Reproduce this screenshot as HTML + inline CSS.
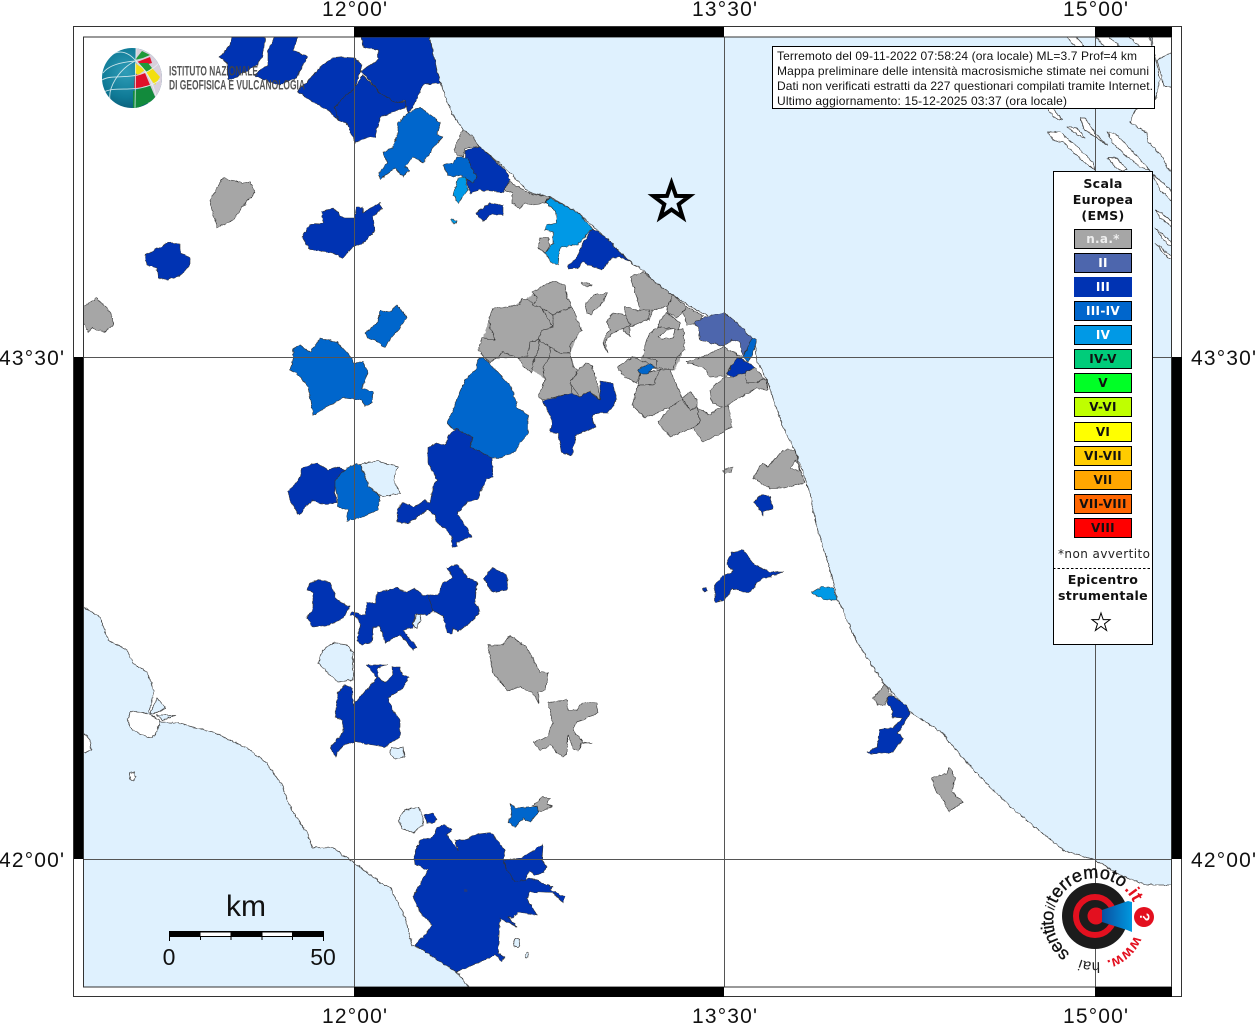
<!DOCTYPE html>
<html><head><meta charset="utf-8"><title>Mappa intensità macrosismiche</title>
<style>
html,body{margin:0;padding:0;background:#fff;width:1255px;height:1024px;overflow:hidden}
svg{display:block}
.l{font-family:"Liberation Sans",sans-serif;font-size:21px;fill:#111}
.t{font-family:"Liberation Sans",sans-serif;font-size:12px;fill:#111}
.b{font-family:"DejaVu Sans",sans-serif;font-weight:bold;font-size:12px;fill:#111;text-anchor:middle;letter-spacing:.3px}
.bb{font-size:12.6px}
.s polygon{stroke:#333;stroke-width:.6;stroke-linejoin:round}
.g polygon{fill:#a6a6a6}
.h polygon{fill:#0033b3}
.m polygon{fill:#0066cc}
.c polygon,.c ellipse{fill:#dff1fe;stroke:#444;stroke-width:.8}
.i polygon{fill:#fff;stroke:#444;stroke-width:.8;stroke-linejoin:round}
</style></head><body>
<svg width="1255" height="1024" viewBox="0 0 1255 1024" xmlns="http://www.w3.org/2000/svg">
<defs>
<filter id="rough" filterUnits="userSpaceOnUse" x="0" y="0" width="1255" height="1024" color-interpolation-filters="sRGB">
<feTurbulence type="fractalNoise" baseFrequency=".22" numOctaves="2" seed="4" result="n"/>
<feDisplacementMap in="SourceGraphic" in2="n" scale="3.2" xChannelSelector="R" yChannelSelector="G"/>
<feGaussianBlur stdDeviation=".25"/>
</filter>
<radialGradient id="gl" cx=".4" cy=".4" r=".7"><stop offset="0" stop-color="#2f9db8"/><stop offset=".6" stop-color="#0f7a96"/><stop offset="1" stop-color="#0a5570"/></radialGradient>
<linearGradient id="cone" x1="0" x2="1" y1="0" y2="0"><stop offset="0" stop-color="#0a4fa0"/><stop offset="1" stop-color="#0099e0"/></linearGradient>
<clipPath id="sph"><circle cx="132" cy="78" r="30"/></clipPath>
<path id="circ" d="M1137 916 A42 42 0 1 1 1136.99 915.9" fill="none"/>
</defs>

<g filter="url(#rough)">
<!-- seas -->
<polygon fill="#dff1fe" stroke="#444" stroke-width=".8" points="429,33 433,53 440,83 453,115 463,130 480,147 507,170 530,193 550,197 577,212 605,237 630,262 643,270 655,282 673,295 693,308 710,317 725,313 737,323 755,342 757,362 767,380 783,427 795,450 810,493 815,522 828,562 837,598 857,642 883,682 910,712 943,733 950,743 972,768 990,787 1020,815 1063,850 1095,860 1120,875 1147,885 1176,885 1176,33"/>
<polygon fill="#dff1fe" stroke="#444" stroke-width=".8" points="78,604 83,607 100,617 108,640 127,650 133,663 147,672 154,690 149,712 160,722 177,723 213,732 247,748 267,763 283,787 290,807 307,833 313,848 332,847 353,862 380,882 390,888 405,917 412,945 433,953 458,973 463,980 473,992 78,992"/>

<!-- Croatian coast and islands -->
<g class="i">
<polygon points="1150,33 1176,33 1176,175 1167,168 1163,157 1148,142 1147,133 1130,122 1135,110 1155,100 1160,80 1155,55"/>
<polygon points="1065,33 1072,33 1085,47 1075,47"/>
<polygon points="1092,33 1105,33 1120,47 1105,47"/>
<polygon points="1125,33 1148,33 1152,47 1140,47"/>
<polygon points="1048,132 1060,132 1073,143 1093,163 1095,170 1085,163 1063,142 1053,140"/>
<polygon points="1067,127 1077,128 1085,138 1077,135"/>
<polygon points="1080,118 1085,118 1095,133 1107,145 1097,138 1085,130"/>
<polygon points="1107,132 1117,135 1133,152 1150,170 1140,167 1123,153 1113,143"/>
<polygon points="1108,158 1117,158 1127,170 1118,170"/>
<polygon points="1047,108 1053,108 1062,120 1055,118"/>
<polygon points="1153,175 1160,180 1176,195 1176,205 1160,190"/>
<polygon points="1155,210 1160,212 1176,224 1176,230 1160,218"/>
<polygon points="1155,228 1160,232 1176,246 1168,245"/>
<polygon points="1155,243 1160,247 1176,260 1168,258"/>
<polygon points="83,732 90,740 91,750 85,753 78,753 78,732"/>
<polygon points="130,773 134,772 136,777 133,781 130,779"/>
<polygon points="128,720 130,712 137,711 148,714 160,720 157,732 152,738 143,735 137,732 130,728"/>
</g>
<g class="c">
<polygon points="1157,60 1176,50 1176,88 1164,86"/>
<polygon points="150,714 157,698 165,708 157,713"/>
<polygon points="157,715 175,715 163,720"/>
</g>

<!-- gray -->
<polygon fill="#a6a6a6" points="489,320 532,295 553,283 565,287 580,330 570,352 576,372 598,387 598,398 545,398 547,380 526,366 518,356 490,360 480,350"/>
<polygon fill="#a6a6a6" points="640,360 655,335 680,332 683,352 675,370 660,372"/>
<g class="s g">
<polygon points="210,200 223,178 243,183 250,182 255,192 240,210 233,220 217,228 212,210"/>
<polygon points="78,307 83,307 97,298 110,312 114,325 105,332 92,328 88,332 83,322 78,322"/>
<polygon points="454,150 460,135 463,130 472,135 479,147 465,148 463,157 457,155"/>
<polygon points="507,180 530,194 550,197 545,203 533,205 525,203 520,209 512,203 512,193 505,190"/>
<polygon points="538,248 540,238 548,238 550,245 545,253"/>
<polygon points="582,282 592,285 588,287 583,285"/>
<polygon points="585,305 593,295 607,293 603,302 590,315 587,313"/>
<polygon points="532,292 553,281 565,285 567,298 572,307 553,315 542,308 533,305 538,298"/>
<polygon points="489,318 493,308 507,307 520,305 522,298 532,302 533,305 542,308 553,327 542,330 538,340 530,342 528,355 518,358 503,352 490,363 478,350 482,338 495,340 490,327"/>
<polygon points="553,315 572,307 577,320 582,330 570,345 570,353 560,353 550,347 538,340 542,330 553,327"/>
<polygon points="530,342 540,340 538,352 533,362 532,373 525,368 518,358 528,355"/>
<polygon points="550,347 560,353 570,353 573,367 578,370 570,383 572,393 543,400 538,397 545,380 543,367 550,357"/>
<polygon points="585,363 592,365 598,387 600,400 590,391 580,397 570,383 578,370"/>
<polygon points="630,277 643,272 655,282 673,295 667,307 652,310 650,320 640,310 637,298"/>
<polygon points="667,307 673,295 687,307 677,318 668,313"/>
<polygon points="683,312 687,307 703,316 697,323 687,325"/>
<polygon points="625,307 638,310 650,310 647,320 630,327 630,337 623,330 627,323 625,315"/>
<polygon points="607,322 613,313 625,315 630,325 620,330 612,333 605,342 608,353 603,343 607,333 610,330"/>
<polygon points="660,320 667,313 680,323 678,330 658,327"/>
<polygon points="645,345 650,333 658,327 678,330 683,328 685,350 677,357 673,370 657,368 657,360 643,357"/>
<polygon style="fill:#fff" points="658,337 667,330 675,329 673,338 663,339"/>
<polygon points="617,367 633,357 645,362 657,368 640,373 637,383 625,377"/>
<polygon points="640,374 660,370 660,375 653,385 638,385"/>
<polygon points="660,370 670,370 683,400 680,403 670,407 657,413 645,418 632,405 638,385 653,385"/>
<polygon points="682,398 690,392 697,400 697,407 690,410"/>
<polygon points="670,407 682,400 690,410 697,408 700,422 693,428 670,437 658,422"/>
<polygon points="700,422 697,408 710,415 718,408 728,405 732,427 722,433 703,442 693,428"/>
<polygon points="686,362 703,357 723,347 735,353 742,357 728,370 727,376 710,377 703,367"/>
<polygon points="710,390 725,377 733,377 753,370 757,377 767,380 768,390 757,388 730,403 723,407 712,403"/>
<polygon points="745,373 755,367 763,378 757,383 747,383"/>
<polygon points="753,478 762,463 768,467 783,450 795,450 800,470 805,483 787,487 785,488 770,488"/>
<polygon style="fill:#fff" points="790,468 796,460 800,471"/>
<polygon points="722,470 733,467 732,472 725,473"/>
<polygon points="488,645 503,645 510,635 527,648 540,672 548,673 545,690 538,692 539,703 532,693 520,687 508,691 493,673"/>
<polygon points="533,742 547,737 553,723 548,702 567,700 568,710 577,710 583,702 597,703 598,713 577,722 573,730 583,742 592,743 582,743 578,751 573,748 568,735 567,753 562,757 550,745 540,751"/>
<polygon points="532,806 542,797 550,798 547,803 552,807 539,812 537,807"/>
<polygon points="873,698 885,685 892,695 887,698 885,705 878,705"/>
<polygon points="932,778 947,773 949,767 955,778 952,792 963,802 949,812 943,800 935,790"/>
</g>

<!-- III-IV -->
<g class="s m">
<polygon points="420,107 440,122 437,135 443,137 433,148 423,163 413,157 405,167 410,170 403,177 395,168 380,179 378,175 387,163 383,152 392,148 398,133 398,123 408,113"/>
<polygon points="293,358 293,350 300,345 310,352 320,338 337,342 352,358 353,363 363,362 368,372 362,388 373,392 372,403 365,407 362,400 343,398 313,415 308,387 297,373 290,370"/>
<polygon points="365,333 378,322 380,310 390,312 397,305 407,317 400,328 392,337 385,348 375,340 367,338"/>
<polygon points="477,360 483,357 510,385 515,398 517,408 528,415 528,433 513,453 500,458 487,458 483,453 470,447 473,438 457,429 453,430 447,423 453,410 465,380 477,368"/>
<polygon points="345,470 352,465 360,464 368,483 380,497 378,510 360,518 347,521 348,510 338,507 337,493 333,482"/>
<polygon points="510,803 515,808 537,807 539,812 530,822 523,818 515,827 508,823 512,813"/>
<polygon points="638,369 650,364 655,367 647,374 640,374"/>
<polygon points="743,357 752,338 757,340 753,353 748,362"/>
</g>

<!-- III -->
<g class="s h">
<polygon points="233,33 265,33 265,41 262,57 257,65 247,70 237,77 228,80 227,63 220,57 230,45"/>
<polygon points="277,33 300,33 293,50 307,57 297,77 280,85 270,82 253,75 268,65 268,50"/>
<polygon points="297,91 307,82 320,67 333,58 343,57 355,58 362,65 355,87 343,98 335,107 338,120 328,110 313,102 303,95"/>
<polygon points="355,87 363,75 380,93 397,103 408,100 405,108 380,117 375,137 365,138 355,143 347,123 338,120 335,107 343,98"/>
<polygon points="362,33 429,33 433,53 440,83 423,85 413,107 408,113 405,100 397,103 380,93 365,75 360,72 363,70 378,60 378,50 363,47"/>
<polygon points="302,237 310,225 323,223 322,212 333,208 343,218 355,218 357,207 363,207 363,213 380,203 382,208 373,217 375,230 363,243 352,248 343,258 330,252 310,250"/>
<polygon points="145,255 158,248 168,243 180,244 180,253 190,258 190,265 182,275 167,280 158,278 157,268 147,265"/>
<polygon points="465,150 480,147 505,170 510,180 503,192 480,190 470,193 465,175"/>
<polygon points="476,213 490,203 503,205 503,215 490,215 483,222"/>
<polygon points="592,228 605,237 630,262 620,257 612,258 602,270 593,267 582,262 578,268 568,269 568,265 577,257 582,245"/>
<polygon points="543,401 572,393 580,397 590,391 597,398 600,400 600,381 613,383 617,400 608,413 597,413 592,417 596,427 576,435 572,455 562,453 558,433 550,433 552,420"/>
<polygon points="727,373 738,357 755,367 745,373 733,377"/>
<polygon points="457,429 473,438 470,447 483,453 492,458 493,477 487,478 477,500 467,502 457,513 470,533 472,537 457,542 457,547 452,547 452,537 445,528 437,523 435,515 427,510 417,517 410,523 398,522 397,512 402,502 415,507 425,500 430,503 433,487 437,480 428,463 428,447 437,443 445,445 450,433"/>
<polygon points="288,492 300,477 302,468 317,463 328,470 338,467 345,470 335,480 335,493 337,502 325,505 313,500 305,507 300,515 297,512 290,500"/>
<polygon points="307,590 310,583 318,580 330,582 337,600 350,607 343,618 330,625 313,627 307,618 313,608 313,592"/>
<polygon points="350,615 353,612 365,615 367,602 375,603 377,593 395,588 407,592 415,588 422,595 428,595 433,610 428,615 415,615 413,627 403,630 417,648 413,650 400,635 385,643 380,627 373,627 372,642 362,645 357,640 360,625 358,618"/>
<polygon points="428,595 438,595 443,583 453,577 447,568 457,564 467,577 477,582 475,603 480,612 470,623 457,632 453,628 452,634 447,632 443,617 433,610"/>
<polygon points="484,578 492,568 502,572 508,578 507,590 497,592 490,590"/>
<polygon points="367,665 387,665 378,668 378,677 385,683 393,675 392,667 400,667 402,675 409,677 403,688 388,698 393,710 400,720 400,737 385,747 355,742 343,745 335,757 330,747 343,733 343,720 335,717 338,693 345,685 352,688 353,705 377,678"/>
<polygon points="414,855 420,840 433,837 437,827 445,825 452,830 447,835 458,850 455,840 467,840 473,835 492,833 505,850 503,860 507,870 513,878 523,880 530,878 553,887 550,890 565,897 563,903 553,893 530,892 527,898 537,915 518,912 513,918 508,917 517,927 500,918 498,953 505,957 502,962 495,955 480,962 457,972 433,957 415,945 423,937 432,925 420,912 413,897 428,870 415,865"/>
<polygon points="503,860 522,858 538,847 543,845 542,860 547,867 543,873 533,875 530,870 525,880 515,882 507,870"/>
<polygon points="425,815 433,813 437,820 432,823 427,823"/>
<polygon points="754,502 762,494 770,497 773,509 763,512 763,516 758,507"/>
<polygon points="727,563 732,552 743,550 755,565 770,572 783,572 767,578 762,578 750,592 742,592 732,588 725,600 715,602 715,585 723,575 733,572"/>
<polygon points="703,589 706,588 707,591 704,592"/>
<polygon points="887,697 893,696 907,707 910,713 902,727 898,733 903,738 893,752 872,754 867,752 877,747 880,730 893,728 902,718 892,717 893,710 887,703"/>
</g>
<circle cx="466" cy="891" r="1.5" fill="#223a80"/>

<!-- III-IV on top -->
<g class="s m">
<polygon points="443,165 453,163 457,157 468,158 472,170 477,177 473,183 463,178 462,175 453,177 448,175"/>
</g>
<!-- IV -->
<g class="s">
<polygon fill="#0099e6" points="458,178 465,177 468,190 458,203 453,195"/>
<polygon fill="#0099e6" points="450,220 453,219 457,221 454,224"/>
<polygon fill="#0099e6" points="546,202 550,198 577,212 592,228 578,245 572,245 560,248 558,265 552,263 545,253 553,243 553,232 545,230 547,225 557,223 556,213"/>
<polygon fill="#0099e6" points="811,593 823,586 833,588 837,600 827,600"/>
<polygon fill="#4d66ad" points="694,322 705,317 725,313 737,323 747,333 752,338 743,357 740,342 732,340 723,346 710,343 700,340 698,327 695,325"/>
</g>

<!-- lakes -->
<g class="c">
<polygon points="360,464 377,461 398,467 393,480 400,493 383,497 368,487 367,480"/>
<polygon points="417,614 422,614 417,628 412,625"/>
<polygon points="318,663 323,650 333,643 347,645 353,653 353,680 338,682 327,672"/>
<polygon points="391,748 403,748 405,757 395,759 390,755"/>
<polygon points="398,820 405,810 418,807 423,817 423,825 413,833 402,828"/>
<ellipse cx="517" cy="943" rx="3.5" ry="4.5"/>
<ellipse cx="527" cy="955" rx="1.8" ry="3"/>
</g>
</g>

<!-- graticule -->
<g stroke="#555" stroke-width="1" fill="none">
<path d="M354.5 37V987M724.5 37V987M1095.5 37V987"/>
<path d="M83 357.5H1172M83 859.5H1172"/>
</g>

<!-- frame -->
<g>
<path fill="#fff" fill-rule="evenodd" d="M73 26H1182V997H73ZM83.5 37V987H1171.5V37Z"/>
<path fill="#fff" d="M0 0H73V1024H0ZM1182 0H1255V1024H1182ZM73 0H1182V26H73ZM73 997H1182V1024H73Z"/>
<rect x="73.5" y="26.5" width="1108" height="970" fill="none" stroke="#333"/>
<rect x="83.5" y="37" width="1088" height="950" fill="none" stroke="#333"/>
<rect x="354" y="27" width="370" height="10" fill="#000"/>
<rect x="1095" y="27" width="77" height="10" fill="#000"/>
<rect x="354" y="987" width="370" height="10" fill="#000"/>
<rect x="1095" y="987" width="77" height="10" fill="#000"/>
<rect x="74" y="357" width="9" height="502" fill="#000"/>
<rect x="1172" y="357" width="10" height="502" fill="#000"/>
</g>

<!-- axis labels -->
<g class="l">
<text x="322" y="16" textLength="65">12°00'</text>
<text x="692" y="16" textLength="65">13°30'</text>
<text x="1063" y="16" textLength="65">15°00'</text>
<text x="322" y="1023" textLength="65">12°00'</text>
<text x="692" y="1023" textLength="65">13°30'</text>
<text x="1063" y="1023" textLength="65">15°00'</text>
<text x="-1" y="365" textLength="65">43°30'</text>
<text x="-1" y="867" textLength="65">42°00'</text>
<text x="1191" y="365" textLength="65">43°30'</text>
<text x="1191" y="867" textLength="65">42°00'</text>
</g>

<!-- INGV logo -->
<circle cx="132" cy="78" r="30" fill="url(#gl)"/>
<g clip-path="url(#sph)">
<polygon fill="#d8d0dc" points="136,48 165,55 165,100 150,110 136,62"/>
<polygon fill="#1f9a3a" points="135,60 142,51 150,55 143,58"/>
<polygon fill="#e0102a" points="137,62 150,57 152,63 145,65"/>
<polygon fill="#1f9a3a" points="138,63 148,63 152,68 147,72"/>
<polygon fill="#f2df10" points="135,63 145,70 138,75 135,73"/>
<polygon fill="#f2df10" points="146,73 152,68 160,77 155,85"/>
<polygon fill="#e0102a" points="135,75 145,73 150,85 134,89"/>
<polygon fill="#128a3c" points="133,91 150,85 156,99 133,110"/>
<g fill="none" stroke="#e8f4f6" stroke-width=".9" opacity=".85">
<path d="M136 48L135 108"/>
<path d="M136 61C120 62 108 66 103 73"/>
<path d="M136 61C125 48 112 50 106 62"/>
<path d="M135 61C118 70 108 88 110 100"/>
<path d="M102 80C115 72 140 85 162 60"/>
<path d="M104 92C118 85 138 95 160 80"/>
<path d="M136 61C146 70 152 80 156 96"/>
</g>
</g>
<g font-family="'Liberation Sans',sans-serif" font-size="13.5" fill="#444" font-weight="bold" opacity=".9">
<text x="169" y="75.5" textLength="89" lengthAdjust="spacingAndGlyphs">ISTITUTO NAZIONALE</text>
<text x="169" y="89.5" textLength="136" lengthAdjust="spacingAndGlyphs">DI GEOFISICA E VULCANOLOGIA</text>
</g>

<!-- epicentre star -->
<polygon points="671.5,183 676,195.9 689.6,196.1 678.7,204.3 682.7,217.4 671.5,209.6 660.3,217.4 664.3,204.3 653.4,196.1 667,195.9" fill="#dff1fe" stroke="#000" stroke-width="4" stroke-miterlimit="8"/>

<!-- info box -->
<rect x="772.5" y="46.5" width="382" height="62" fill="#fff" stroke="#000"/>
<g class="t">
<text x="777" y="60" textLength="360">Terremoto del 09-11-2022 07:58:24 (ora locale) ML=3.7 Prof=4 km</text>
<text x="777" y="75" textLength="372">Mappa preliminare delle intensità macrosismiche stimate nei comuni</text>
<text x="777" y="90" textLength="376">Dati non verificati estratti da 227 questionari compilati tramite Internet.</text>
<text x="777" y="105" textLength="290">Ultimo aggiornamento: 15-12-2025 03:37 (ora locale)</text>
</g>

<!-- legend -->
<rect x="1053.5" y="171.5" width="99" height="473" fill="#fff" stroke="#000"/>
<g class="b bb">
<text x="1103" y="188">Scala</text>
<text x="1103" y="204">Europea</text>
<text x="1103" y="220">(EMS)</text>
</g>
<g stroke="#000" stroke-width="1">
<rect x="1074.5" y="229.5" width="57" height="19" fill="#a6a6a6"/>
<rect x="1074.5" y="253.5" width="57" height="19" fill="#4d66ad"/>
<rect x="1074.5" y="277.5" width="57" height="19" fill="#0033b3" stroke="#0033b3"/>
<rect x="1074.5" y="301.5" width="57" height="19" fill="#0066cc"/>
<rect x="1074.5" y="325.5" width="57" height="19" fill="#0099e6"/>
<rect x="1074.5" y="349.5" width="57" height="19" fill="#00cc7a"/>
<rect x="1074.5" y="373.5" width="57" height="19" fill="#00ff26"/>
<rect x="1074.5" y="397.5" width="57" height="19" fill="#bfff00"/>
<rect x="1074.5" y="422.5" width="57" height="19" fill="#ffff00"/>
<rect x="1074.5" y="446.5" width="57" height="19" fill="#ffcc00"/>
<rect x="1074.5" y="470.5" width="57" height="19" fill="#ffa600"/>
<rect x="1074.5" y="494.5" width="57" height="19" fill="#ff6600"/>
<rect x="1074.5" y="518.5" width="57" height="19" fill="#ff0000"/>
</g>
<g class="b">
<text x="1103" y="243" style="fill:#eee">n.a.*</text>
<text x="1103" y="267" style="fill:#fff">II</text>
<text x="1103" y="291" style="fill:#fff">III</text>
<text x="1103" y="315" style="fill:#fff">III-IV</text>
<text x="1103" y="339" style="fill:#fff">IV</text>
<text x="1103" y="363">IV-V</text>
<text x="1103" y="387">V</text>
<text x="1103" y="411">V-VI</text>
<text x="1103" y="436">VI</text>
<text x="1103" y="460">VI-VII</text>
<text x="1103" y="484">VII</text>
<text x="1103" y="508">VII-VIII</text>
<text x="1103" y="532">VIII</text>
</g>
<text x="1058" y="558" font-family="'DejaVu Sans',sans-serif" font-size="12" fill="#222" textLength="92">*non avvertito</text>
<line x1="1053" y1="568.5" x2="1153" y2="568.5" stroke="#000" stroke-dasharray="2.5 2"/>
<g class="b bb">
<text x="1103" y="584">Epicentro</text>
<text x="1103" y="600">strumentale</text>
</g>
<polygon points="1101,613 1103.2,619.6 1110,619.6 1104.5,623.8 1106.6,630.5 1101,626.4 1095.4,630.5 1097.5,623.8 1092,619.6 1098.8,619.6" fill="#fff" stroke="#000" stroke-width="1"/>

<!-- scale bar -->
<g>
<rect x="169" y="931" width="155" height="6" fill="#000"/>
<rect x="200.5" y="932.5" width="30" height="3.5" fill="#fff"/>
<rect x="262.5" y="932.5" width="29.5" height="3.5" fill="#fff"/>
<path d="M169.5 931V941M200.5 937V940M231 937V940M262 937V940M292.5 937V940M323.5 931V941" stroke="#000" fill="none"/>
</g>
<g font-family="'Liberation Sans',sans-serif" fill="#111">
<text x="226" y="916" font-size="30" textLength="40">km</text>
<text x="169" y="965" font-size="23" text-anchor="middle">0</text>
<text x="323" y="965" font-size="23" text-anchor="middle">50</text>
</g>

<!-- hai sentito logo -->
<circle cx="1095" cy="916" r="33" fill="#1c1c1c"/>
<circle cx="1095" cy="916" r="19" fill="none" stroke="#e3101f" stroke-width="6"/>
<circle cx="1096" cy="916" r="8.5" fill="#e3101f"/>
<polygon points="1102,910 1128,901 1132,902 1132,932 1127,930 1102,922" fill="url(#cone)"/>
<circle cx="1144" cy="917" r="10" fill="#e3101f"/>
<text x="1144" y="921" font-family="'Liberation Sans',sans-serif" font-weight="bold" font-size="14" fill="#fff" text-anchor="middle" transform="rotate(90 1144 917)">?</text>
<g font-family="'Liberation Sans',sans-serif">
<text font-size="15" font-weight="bold" fill="#e3101f"><textPath href="#circ" startOffset="20">www.</textPath></text>
<text font-size="15" fill="#222"><textPath href="#circ" startOffset="65">hai</textPath></text>
<text font-size="18" fill="#111" stroke="#111" stroke-width=".3" letter-spacing="-.9"><textPath href="#circ" startOffset="97">sentito</textPath></text>
<text font-size="14" font-style="italic" fill="#222"><textPath href="#circ" startOffset="145">il</textPath></text>
<text font-size="18" fill="#111" stroke="#111" stroke-width=".4" letter-spacing=".2"><textPath href="#circ" startOffset="152">terremoto</textPath></text>
<text font-size="18" font-weight="bold" fill="#e3101f"><textPath href="#circ" startOffset="233">.it</textPath></text>
</g>
</svg>
</body></html>
